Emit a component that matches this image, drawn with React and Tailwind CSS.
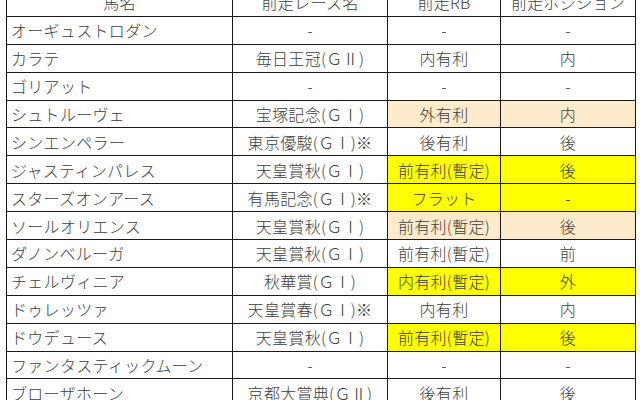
import React from 'react'

const rows = [
  ['オーギュストロダン', '-', '-', '-', ''],
  ['カラテ', '毎日王冠(ＧⅡ)', '内有利', '内', ''],
  ['ゴリアット', '-', '-', '-', ''],
  ['シュトルーヴェ', '宝塚記念(ＧⅠ)', '外有利', '内', 'peach'],
  ['シンエンペラー', '東京優駿(ＧⅠ)※', '後有利', '後', ''],
  ['ジャスティンパレス', '天皇賞秋(ＧⅠ)', '前有利(暫定)', '後', 'yellow'],
  ['スターズオンアース', '有馬記念(ＧⅠ)※', 'フラット', '-', 'yellow'],
  ['ソールオリエンス', '天皇賞秋(ＧⅠ)', '前有利(暫定)', '後', 'peach'],
  ['ダノンベルーガ', '天皇賞秋(ＧⅠ)', '前有利(暫定)', '前', ''],
  ['チェルヴィニア', '秋華賞(ＧⅠ)', '内有利(暫定)', '外', 'yellow'],
  ['ドゥレッツァ', '天皇賞春(ＧⅠ)※', '内有利', '内', ''],
  ['ドウデュース', '天皇賞秋(ＧⅠ)', '前有利(暫定)', '後', 'yellow'],
  ['ファンタスティックムーン', '-', '-', '-', ''],
  ['ブローザホーン', '京都大賞典(ＧⅡ)', '後有利', '後', ''],
]

const hl = {
  '': 'bg-white',
  peach: 'bg-[#fdebcb]',
  yellow: 'bg-[#ffff00]',
}

const cell = 'border border-[#1a1a1a] h-[27.9px] p-0 leading-none whitespace-nowrap'

export default function App() {
  return (
    <div className="h-[400px] w-[640px] overflow-hidden bg-white">
      <table
        className="mt-[-12px] ml-[6px] w-[629px] table-fixed border-collapse text-[16px] tracking-[0.3px] font-light text-[#3c3c3c]"
        style={{ fontFamily: '"Noto Sans CJK JP", "Noto Sans", sans-serif' }}
      >
        <colgroup>
          <col className="w-[226px]" />
          <col className="w-[155px]" />
          <col className="w-[113px]" />
          <col className="w-[135px]" />
        </colgroup>
        <thead>
          <tr>
            <th className={`${cell} font-light text-center`}>馬名</th>
            <th className={`${cell} font-light text-center`}>前走レース名</th>
            <th className={`${cell} font-light text-center`}>前走RB</th>
            <th className={`${cell} font-light text-center`}>前走ポジション</th>
          </tr>
        </thead>
        <tbody>
          {rows.map(([name, race, rb, pos, mark]) => (
            <tr key={name}>
              <td className={`${cell} pl-[4px] text-left`}>{name}</td>
              <td className={`${cell} text-center`}>{race}</td>
              <td className={`${cell} text-center ${hl[mark]}`}>{rb}</td>
              <td className={`${cell} text-center ${hl[mark]}`}>{pos}</td>
            </tr>
          ))}
        </tbody>
      </table>
    </div>
  )
}
